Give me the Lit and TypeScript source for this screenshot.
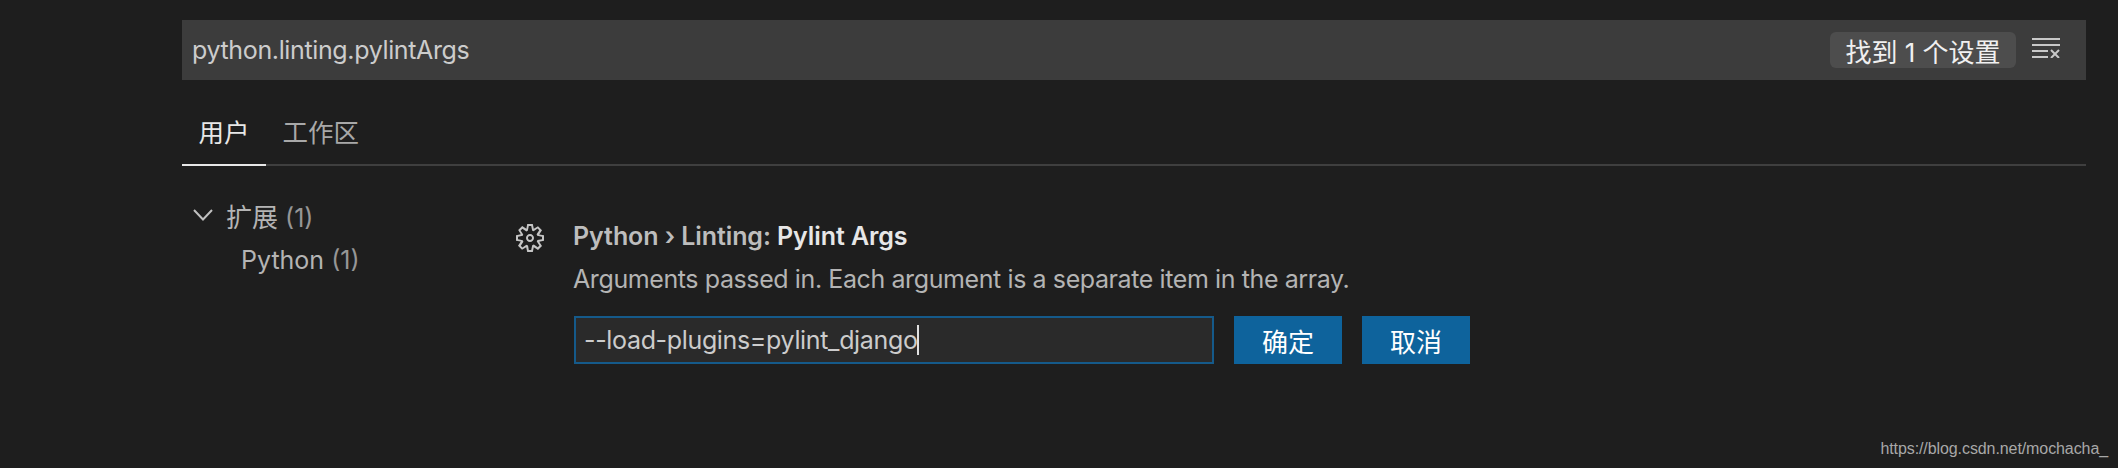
import { LitElement, html, css } from "lit";
import { customElement } from "lit/decorators.js";

@customElement("app-root")
export class AppRoot extends LitElement {
  static styles = css`
    :host {
      display: block;
      position: relative;
      width: 2118px;
      height: 468px;
      overflow: hidden;
      background: #1e1e1e;
      font-family: Inter, "Noto Sans CJK SC", sans-serif;
      color: #cccccc;
    }
    .page {
      padding: 20px 32px 0 182px;
      display: flex;
      flex-direction: column;
    }
    .search {
      height: 60px;
      background: #3c3c3c;
      display: flex;
      align-items: center;
      padding: 0 26px 0 10px;
      font-size: 25px;
      color: #cccccc;
    }
    .query { flex: 1; letter-spacing: -0.36px; }
    .badge {
      height: 36px;
      width: 186px;
      box-sizing: border-box;
      display: flex;
      align-items: center;
      justify-content: center;
      background: #4d4d4d;
      border-radius: 6px;
      color: #f0f0f0;
      font-size: 26px;
      white-space: pre;
    }
    .clear { margin: 0 0 4px 16px; display: block; }
    .tabs {
      margin-top: 22px;
      height: 64px;
      box-sizing: border-box;
      border-bottom: 2px solid #3f3f3f;
      display: flex;
    }
    .tab {
      padding: 0 16.5px;
      height: 64px;
      box-sizing: border-box;
      line-height: 61px;
      font-size: 25.5px;
      color: #a8a8a8;
    }
    .tab.active {
      color: #e7e7e7;
      border-bottom: 2px solid #e7e7e7;
    }
    .body { display: flex; margin-top: 32px; }
    .tree { width: 332px; font-size: 25px; color: #b4b4b4; }
    .group { display: flex; align-items: center; gap: 13px; padding-left: 11px; height: 34px; }
    .cjk { font-size: 26px; }
    .leaf { padding-left: 59px; height: 34px; margin-top: 11px; display: flex; align-items: center; }
    .count { color: #969696; }
    .setting { display: flex; gap: 27px; margin-top: 20px; }
    .gear { display: block; margin-top: 4px; }
    .content { display: flex; flex-direction: column; }
    .title { font-size: 25px; font-weight: 600; color: #bdbdbd; line-height: 36px; letter-spacing: -0.08px; }
    .title b { font-weight: 600; color: #e7e7e7; }
    .desc { font-size: 25px; color: #b4b4b4; line-height: 36px; margin-top: 7px; letter-spacing: -0.4px; }
    .edit { display: flex; margin-top: 19px; margin-left: 1px; }
    .input {
      width: 640px;
      height: 48px;
      box-sizing: border-box;
      background: #2a2a2a;
      border: 2px solid #155a8a;
      padding-left: 8px;
      display: flex;
      align-items: center;
      font-size: 25px;
      color: #cccccc;
      letter-spacing: -0.34px;
    }
    .caret { width: 2px; height: 30px; background: #e0e0e0; margin-left: -1px; }
    .btn {
      width: 108px;
      height: 48px;
      margin-left: 20px;
      background: #0e639c;
      color: #ffffff;
      font-size: 26px;
      display: flex;
      align-items: center;
      justify-content: center;
    }
    .mark {
      position: absolute;
      right: 10px;
      top: 439px;
      font-family: "Liberation Sans", sans-serif;
      font-size: 16px;
      line-height: 20px;
      letter-spacing: -0.09px;
      color: #a8a8a8;
    }
  `;

  render() {
    return html`
      <div class="page">
        <div class="search">
          <span class="query">python.linting.pylintArgs</span>
          <span class="badge">找到 1 个设置</span>
          <svg class="clear" width="28" height="20" viewBox="0 0 28 20" fill="none" stroke="#c8c8c8" stroke-width="2">
            <path d="M0 1H28M0 7H28M0 13H16M0 19H16" />
            <path d="M19 12L27 20M27 12L19 20" />
          </svg>
        </div>
        <div class="tabs">
          <div class="tab active">用户</div>
          <div class="tab">工作区</div>
        </div>
        <div class="body">
          <div class="tree">
            <div class="group">
              <svg width="20" height="12" viewBox="0 0 20 12" fill="none" stroke="#c0c0c0" stroke-width="2"><path d="M1 1L10 10.500L19 1" /></svg>
              <span><span class="cjk">扩展</span> <span class="count">(1)</span></span>
            </div>
            <div class="leaf"><span>Python <span class="count">(1)</span></span></div>
          </div>
          <div class="setting">
            <svg class="gear" width="32" height="32" viewBox="0 0 16 16" fill="#c5c5c5">
              <path fill-rule="evenodd" clip-rule="evenodd" d="M9.1 4.4L8.600 2H7.400l-.5 2.400-.7.3-2-1.300-.9.8 1.300 2-.2.7-2.400.5v1.200l2.400.5.3.8-1.300 2 .8.8 2-1.300.8.3.4 2.300h1.200l.5-2.400.8-.3 2 1.300.8-.8-1.300-2 .3-.8 2.300-.4V7.400l-2.400-.5-.3-.8 1.300-2-.8-.8-2 1.300-.7-.2zM9.400 1l.5 2.400L12 2.100l2 2-1.400 2.100 2.400.4v2.800l-2.400.5L14 12l-2 2-2.100-1.400-.5 2.400H6.600l-.5-2.400L4 13.900l-2-2 1.400-2.100L1 9.400V6.600l2.400-.5L2.100 4l2-2 2.100 1.400.4-2.400h2.800zm.6 7c0 1.100-.9 2-2 2s-2-.9-2-2 .9-2 2-2 2 .9 2 2zM8 9c.6 0 1-.4 1-1s-.4-1-1-1-1 .4-1 1 .4 1 1 1z" />
            </svg>
            <div class="content">
              <div class="title">Python › Linting: <b>Pylint Args</b></div>
              <div class="desc">Arguments passed in. Each argument is a separate item in the array.</div>
              <div class="edit">
                <div class="input"><span>--load-plugins=pylint_django</span><span class="caret"></span></div>
                <div class="btn">确定</div>
                <div class="btn">取消</div>
              </div>
            </div>
          </div>
        </div>
      </div>
      <div class="mark">https://blog.csdn.net/mochacha_</div>
    `;
  }
}
